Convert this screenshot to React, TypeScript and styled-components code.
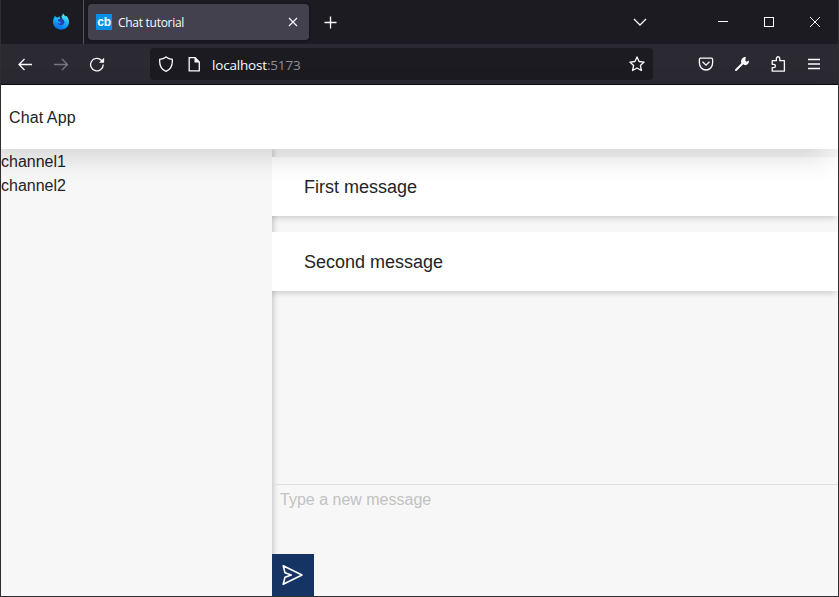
import React from 'react';
import styled, { createGlobalStyle } from 'styled-components';

const GlobalStyle = createGlobalStyle`
  * { box-sizing: border-box; }
  body { margin: 0; background: #2e2e2e; overflow: hidden; }
`;

const Window = styled.div`
  width: 839px;
  height: 597px;
  display: flex;
  flex-direction: column;
  border: 1px solid #2f2f31;
  border-top: 0;
  background: #f7f7f7;
  overflow: hidden;
`;

const TabBar = styled.div`
  display: flex;
  align-items: center;
  flex: 0 0 44px;
  background: #1c1b22;
  color: #fbfbfe;
`;

const PinnedTab = styled.div`
  width: 83px;
  height: 44px;
  padding: 13px 0 0 51px;
  border-right: 1px solid #54535a;
`;

const Tab = styled.div`
  display: flex;
  align-items: center;
  width: 221px;
  height: 36px;
  margin-left: 4px;
  padding: 0 8px;
  border-radius: 4px;
  background: #42414d;
  box-shadow: 0 0 3px rgba(0, 0, 0, 0.5);
`;

const Favicon = styled.div`
  width: 16px;
  height: 16px;
  background: #0791e6;
  color: #fff;
  font: bold 12px/16px 'Liberation Sans', Arial, sans-serif;
  text-align: center;
  letter-spacing: -0.2px;
`;

const TabTitle = styled.span`
  flex: 1;
  margin-left: 6px;
  padding-top: 2px;
  font: 12px/18px 'Open Sans', sans-serif;
  letter-spacing: -0.28px;
`;

const Icon = styled.svg<{ $gap?: number }>`
  display: block;
  flex: none;
  margin-left: ${(p) => p.$gap ?? 0}px;
  fill: none;
  stroke: currentColor;
  stroke-width: 1.3;
`;

const NavBar = styled.div`
  display: flex;
  align-items: center;
  flex: 0 0 41px;
  padding-left: 16px;
  background: #2b2a33;
  border-bottom: 1px solid #0c0c0d;
  color: #fbfbfe;
`;

const Dimmed = styled.div`
  margin-left: 20px;
  color: #77767e;
`;

const AddressBar = styled.div`
  display: flex;
  align-items: center;
  width: 503px;
  height: 32px;
  margin-left: 45px;
  padding: 0 8px;
  border-radius: 4px;
  background: #1c1b22;
`;

const Address = styled.span`
  flex: 1;
  margin-left: 10px;
  padding-top: 2px;
  font: 13.5px/20px 'Open Sans', sans-serif;
  letter-spacing: -0.18px;
`;

const Port = styled.span`
  color: #8f8e95;
`;

const AppHeader = styled.header`
  position: relative;
  z-index: 2;
  display: flex;
  align-items: center;
  flex: 0 0 64px;
  padding: 2px 0 0 8px;
  background: #fff;
  color: #242424;
  font: 16px/24px 'Liberation Sans', Arial, sans-serif;
  letter-spacing: 0.1px;
  box-shadow: -10px 8px 28px rgba(0, 0, 0, 0.15);
`;

const Body = styled.div`
  display: flex;
  flex: 1;
  min-height: 0;
  font: 16px/24px 'Liberation Sans', Arial, sans-serif;
  color: #242424;
`;

const Channels = styled.nav`
  width: 271px;
  background: #f7f7f7;
  box-shadow: 1px 0 6px rgba(0, 0, 0, 0.23);
`;

const Channel = styled.div`
  height: 24px;
  line-height: 26px;
`;

const Chat = styled.main`
  display: flex;
  flex-direction: column;
  flex: 1;
`;

const Messages = styled.section`
  display: flex;
  flex-direction: column;
  gap: 16px;
  flex: 0 0 335px;
  padding-top: 8px;
`;

const Message = styled.article`
  position: relative;
  height: 59px;
  padding-left: 32px;
  background: #fff;
  font-size: 18px;
  line-height: 60px;
  box-shadow: -2px 2px 6px rgba(0, 0, 0, 0.18);
  clip-path: inset(0 0 -12px 0);
`;

const Composer = styled.textarea`
  display: block;
  height: 70px;
  margin: 0 0 0 3px;
  padding: 3px 5px;
  border: 0;
  border-top: 1px solid #dfdfdf;
  background: transparent;
  resize: none;
  outline: none;
  font: 16px/24px 'Liberation Sans', Arial, sans-serif;
  &::placeholder { color: #c2c2c2; opacity: 1; }
`;

const SendButton = styled.button`
  position: relative;
  display: flex;
  align-items: center;
  width: 42px;
  height: 42px;
  padding: 0 0 0 8px;
  border: 0;
  background: #153363;
  color: #fff;
`;

const FirefoxLogo = () => (
  <svg width="18" height="18" viewBox="0 0 18 18">
    <defs>
      <linearGradient id="flame" x1="0.7" y1="0" x2="0.3" y2="1">
        <stop offset="0" stopColor="#62f3fa" />
        <stop offset="0.45" stopColor="#16b4fb" />
        <stop offset="1" stopColor="#0864e8" />
      </linearGradient>
    </defs>
    <path fill="url(#flame)" d="M2.7 2.4 4 4.2 6 4.4 7.5 3.3 8 5.5l2.2.6L9.4 3.5 11.3.4l1.4 2.3 1.2.9.4-.8C16.2 4.8 17 6.7 17 9c0 4.4-3.5 7.7-8 7.7S1 13.5 1 9.1c0-2.1.6-3.6 1.3-4.5z" />
    <path fill="#2a3fb0" d="M6 8.2 6.4 6 9.5 5.8c2.2.4 3.3 2.2 2.8 4-.4 1.7-1.8 2.6-3.5 2.5-1.5-.1-2.7-.9-3.1-2.1l2.4.2 1.1-1.2z" />
  </svg>
);

const App = () => (
  <>
    <GlobalStyle />
    <Window>
      <TabBar>
        <PinnedTab><FirefoxLogo /></PinnedTab>
        <Tab>
          <Favicon>cb</Favicon>
          <TabTitle>Chat tutorial</TabTitle>
          <Icon width="16" height="16"><path strokeWidth="1.1" d="m4 4 8 8m0-8-8 8" /></Icon>
        </Tab>
        <Icon $gap={13} width="16" height="16"><path d="M8.5 2.5v12M2.5 8.5h12" /></Icon>
        <Icon $gap={293} width="18" height="16"><path d="m3 5 6 6 6-6" /></Icon>
        <Icon $gap={66} width="16" height="16" shapeRendering="crispEdges"><path strokeWidth="1" d="M3 7.5h10" /></Icon>
        <Icon $gap={30} width="16" height="16" shapeRendering="crispEdges"><path strokeWidth="1" d="M3.5 3.5h9v9h-9z" /></Icon>
        <Icon $gap={30} width="16" height="16"><path strokeWidth="1" d="m3 3 10 10m0-10L3 13" /></Icon>
      </TabBar>
      <NavBar>
        <Icon width="16" height="16"><path d="M15 8.5H2m5.5-5.5L2 8.5 7.5 14" /></Icon>
        <Dimmed><Icon width="16" height="16"><path d="M1 8.5h14m-6-5.5 5.5 5.5-5.5 5.5" /></Icon></Dimmed>
        <Icon $gap={20} width="16" height="16">
          <path d="M14.2 8.5a6.3 6.3 0 1 1-1.8-4.3l1.8 1.8" />
          <path fill="currentColor" stroke="none" d="M10 6.8h5.1V1.7z" />
        </Icon>
        <AddressBar>
          <Icon width="16" height="16"><path d="M8 .9c2 1.6 3.8 2.2 6.3 2.5.4 5.5-1.2 10-6.3 12C2.9 13.4 1.3 8.9 1.7 3.4 4.2 3.1 6 2.5 8 .9z" /></Icon>
          <Icon $gap={12} width="16" height="16"><path d="M3.2 1.7h6L13.3 6v8.8H3.2z" /><path fill="currentColor" stroke="none" d="M8.5 1.5 13.5 6.5h-5z" /></Icon>
          <Address>localhost<Port>:5173</Port></Address>
          <Icon width="16" height="16"><path strokeLinejoin="round" d="m8 .9 2.1 4.6 5 .6-3.7 3.4 1 5L8 12l-4.4 2.5 1-5L.9 6.1l5-.6z" /></Icon>
        </AddressBar>
        <Icon $gap={45} width="16" height="16">
          <path d="M2.4 2.2h11.2q1 0 1 1V7c0 3.9-2.9 7-6.6 7S1.4 10.9 1.4 7V3.2q0-1 1-1zM4.5 5.8 8 9.2l3.5-3.4" />
        </Icon>
        <Icon $gap={20} width="16" height="16">
          <path strokeWidth="2" strokeLinecap="round" d="m2 14 6.5-6.5" />
          <path fill="currentColor" stroke="none" d="m11.8 1-.5 3.5 1.2 1.2L15 4.6c.3 3-1.9 5-4.6 4.5L7.1 6.6C6.7 3.5 8.8.7 11.8 1z" />
        </Icon>
        <Icon $gap={20} width="16" height="16">
          <path strokeLinejoin="round" d="M2.2 15.2v-3.6h1.5c2.3 0 2.3-3.3 0-3.3H2.2V4.7h4.2V2.6c0-2.5 3.4-2.5 3.4 0v2.1h4.6v10.5z" />
        </Icon>
        <Icon $gap={20} width="16" height="16"><path d="M2 3.5h12M2 8h12M2 12.5h12" /></Icon>
      </NavBar>
      <AppHeader>Chat App</AppHeader>
      <Body>
        <Channels>
          <Channel>channel1</Channel>
          <Channel>channel2</Channel>
        </Channels>
        <Chat>
          <Messages>
            <Message>First message</Message>
            <Message>Second message</Message>
          </Messages>
          <Composer placeholder="Type a new message" />
          <SendButton aria-label="Send">
            <Icon width="24" height="24">
              <path strokeWidth="1.6" strokeLinejoin="round" d="M3.2 2.7 22 12 3.2 21.3 5 14.2 11.3 12 5 9.8z" />
            </Icon>
          </SendButton>
        </Chat>
      </Body>
    </Window>
  </>
);

export default App;
